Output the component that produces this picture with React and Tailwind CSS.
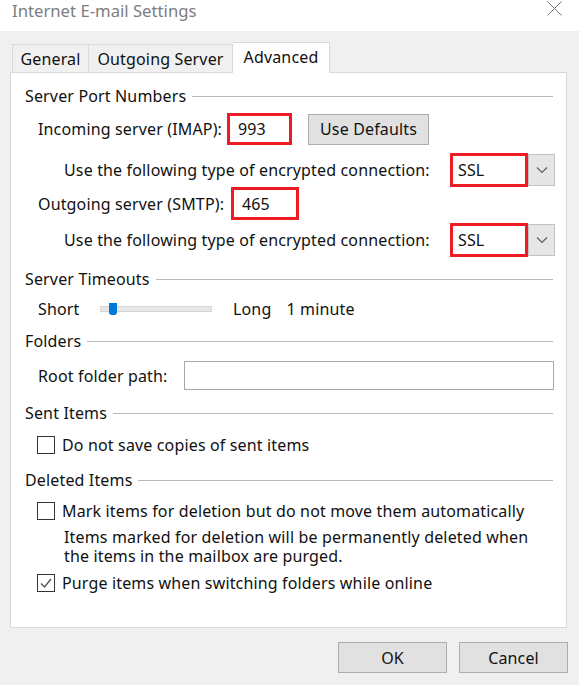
import React from "react";

const GroupHeader = ({ title, className = "" }) => (
  <div className={`flex items-center h-[20px] pl-[14px] pr-[13px] ${className}`}>
    <span className="whitespace-nowrap">{title}</span>
    <div className="flex-1 h-px bg-[#b9b9b9] ml-[6px]" />
  </div>
);

const Checkbox = ({ checked, label, className = "" }) => (
  <div className={`flex items-center h-[20px] pl-[26px] ${className}`}>
    <div className="w-[18px] h-[18px] border border-[#333333] bg-white flex items-center justify-center">
      {checked && (
        <svg width="14" height="14" viewBox="0 0 14 14" fill="none">
          <path d="M2 7.5 L5.5 11 L12 3" stroke="#555555" strokeWidth="1.4" />
        </svg>
      )}
    </div>
    <span className="ml-[7px] whitespace-nowrap">{label}</span>
  </div>
);

const SslCombo = () => (
  <div className="flex items-center">
    <div className="w-[78px] h-[34px] border-[3px] border-[#ed1c24] bg-white flex items-center pl-[5px]">
      SSL
    </div>
    <div className="w-[27px] h-[32px] bg-[#e6e6e6] border border-[#c2c2c2] flex items-center justify-center">
      <svg width="12" height="8" viewBox="0 0 12 8" fill="none">
        <path d="M1 1.5 L6 6.5 L11 1.5" stroke="#606060" strokeWidth="1.2" />
      </svg>
    </div>
  </div>
);

const DialogButton = ({ children }) => (
  <button className="w-[109px] h-[31px] bg-[#e1e1e1] border border-[#adadad] text-[16px] tracking-[0.15px] text-[#111111]">
    {children}
  </button>
);

export default function App() {
  return (
    <div
      className="w-[579px] h-[685px] bg-[#f0f0f0] text-[16px] tracking-[0.15px] text-[#111111] overflow-hidden"
      style={{ fontFamily: '"Segoe UI", "Noto Sans", "Open Sans", sans-serif' }}
    >
      {/* Title bar */}
      <div className="h-[31px] bg-white flex items-start justify-between pl-[12px] pr-[17px]">
        <span className="text-[16.7px] tracking-normal text-[#7d7d7d] leading-[22px]">Internet E-mail Settings</span>
        <svg width="15" height="15" viewBox="0 0 15 15" className="mt-[1px]">
          <path d="M0.5 0.5 L14.5 14.5 M14.5 0.5 L0.5 14.5" stroke="#777777" strokeWidth="1" />
        </svg>
      </div>

      {/* Tabs */}
      <div className="flex items-end h-[41px] pl-[12px]">
        <div className="w-[77px] h-[28px] border border-b-0 border-[#d9d9d9] bg-[#f0f0f0] flex items-center justify-center">
          General
        </div>
        <div className="w-[144px] h-[28px] border border-l-0 border-b-0 border-[#d9d9d9] bg-[#f0f0f0] flex items-center justify-center">
          Outgoing Server
        </div>
        <div className="w-[97px] h-[31px] border border-l-0 border-b-0 border-[#d9d9d9] bg-white flex items-start justify-center pt-[2px] -mb-px relative z-10">
          Advanced
        </div>
      </div>

      {/* Panel */}
      <div className="ml-[10px] w-[557px] h-[556px] border border-[#d9d9d9] bg-white pt-[13px]">
        <GroupHeader title="Server Port Numbers" />

        <div className="flex items-center h-[32px] mt-[7px] pl-[27px]">
          <span className="w-[189px] whitespace-nowrap">Incoming server (IMAP):</span>
          <div className="w-[65px] h-[32px] border-[3px] border-[#ed1c24] bg-white flex items-center pl-[8px]">
            993
          </div>
          <div className="ml-[16px] w-[121px] h-[31px] bg-[#e1e1e1] border border-[#adadad] flex items-center justify-center">
            Use Defaults
          </div>
        </div>

        <div className="flex items-center h-[34px] mt-[8px] pl-[53px]">
          <span className="w-[386px] whitespace-nowrap">Use the following type of encrypted connection:</span>
          <SslCombo />
        </div>

        <div className="flex items-center h-[33px] pl-[27px]">
          <span className="w-[193px] whitespace-nowrap">Outgoing server (SMTP):</span>
          <div className="w-[68px] h-[33px] border-[3px] border-[#ed1c24] bg-white flex items-center pl-[8px]">
            465
          </div>
        </div>

        <div className="flex items-center h-[33px] mt-[3px] pl-[53px]">
          <span className="w-[386px] whitespace-nowrap">Use the following type of encrypted connection:</span>
          <SslCombo />
        </div>

        <GroupHeader title="Server Timeouts" className="mt-[13px]" />

        <div className="flex items-center h-[20px] mt-[10px] pl-[27px]">
          <span className="w-[62px]">Short</span>
          <div className="relative w-[112px] h-[6px] bg-[#e7e7e7] border border-[#d6d6d6]">
            <div className="absolute left-[8px] -top-[4px] w-[8px] h-[12px] bg-[#0078d7] rounded-b-[3px]" />
          </div>
          <span className="ml-[21px]">Long</span>
          <span className="ml-[15px]">1 minute</span>
        </div>

        <GroupHeader title="Folders" className="mt-[12px]" />

        <div className="flex items-center h-[29px] mt-[10px] pl-[27px]">
          <span className="w-[146px] whitespace-nowrap">Root folder path:</span>
          <div className="w-[370px] h-[29px] border border-[#a8a8a8] bg-white" />
        </div>

        <GroupHeader title="Sent Items" className="mt-[13px]" />
        <Checkbox label="Do not save copies of sent items" className="mt-[12px]" />

        <GroupHeader title="Deleted Items" className="mt-[15px]" />
        <Checkbox label="Mark items for deletion but do not move them automatically" className="mt-[11px]" />
        <div className="pl-[53px] mt-[7px] whitespace-nowrap leading-[19px]">
          <div className="h-[19px]">Items marked for deletion will be permanently deleted when</div>
          <div className="h-[19px]">the items in the mailbox are purged.</div>
        </div>
        <Checkbox checked label="Purge items when switching folders while online" className="mt-[7px]" />
      </div>

      {/* Buttons */}
      <div className="flex justify-end gap-[12px] mt-[14px] pr-[11px]">
        <DialogButton>OK</DialogButton>
        <DialogButton>Cancel</DialogButton>
      </div>
    </div>
  );
}
